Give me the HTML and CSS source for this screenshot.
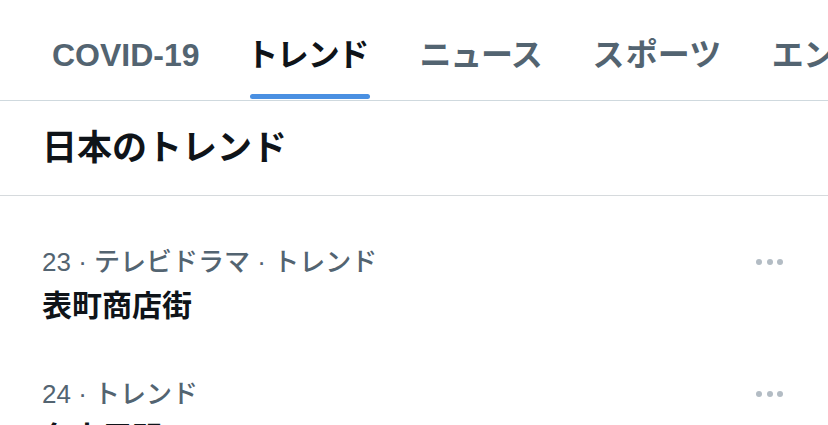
FILE: index.html
```
<!DOCTYPE html>
<html lang="ja">
<head>
  <meta charset="UTF-8">
  <meta name="viewport" content="width=device-width, initial-scale=1.0">
  <title>話題を検索</title>
  <link rel="stylesheet" href="styles.css">
</head>
<body>
  <div class="tabs">
    <div class="tab">
      <span class="tab-text latin">COVID-19</span>
      <span class="tab-bar"></span>
    </div>
    <div class="tab active">
      <span class="tab-text">トレンド</span>
      <span class="tab-bar"></span>
    </div>
    <div class="tab">
      <span class="tab-text">ニュース</span>
      <span class="tab-bar"></span>
    </div>
    <div class="tab">
      <span class="tab-text">スポーツ</span>
      <span class="tab-bar"></span>
    </div>
    <div class="tab">
      <span class="tab-text">エンタメ</span>
      <span class="tab-bar"></span>
    </div>
  </div>

  <div class="section-title">
    <h2>日本のトレンド</h2>
  </div>

  <div class="trend">
    <div class="trend-body">
      <div class="trend-meta">23 · テレビドラマ · トレンド</div>
      <div class="trend-name">表町商店街</div>
    </div>
    <div class="trend-more">
      <span class="dot"></span><span class="dot"></span><span class="dot"></span>
    </div>
  </div>

  <div class="trend">
    <div class="trend-body">
      <div class="trend-meta">24 · トレンド</div>
      <div class="trend-name">名古屋駅</div>
    </div>
    <div class="trend-more">
      <span class="dot"></span><span class="dot"></span><span class="dot"></span>
    </div>
  </div>
</body>
</html>
```

FILE: styles.css
```
body {
  margin: 0;
  background-color: #fff;
  font-family: 'Liberation Sans', 'Noto Sans CJK JP', sans-serif;
  color: #0f1419;
  overflow: hidden;
}

.tabs {
  display: flex;
  height: 100px;
  padding-left: 27px;
  border-bottom: 1px solid #cfd9de;
  white-space: nowrap;
}

.tab {
  display: flex;
  flex-direction: column;
  align-items: center;
  padding: 0 25px;
  flex-shrink: 0;
}

.tab-text {
  margin-top: 39px;
  line-height: 32px;
  font-size: 32px;
  font-weight: 700;
  color: #536471;
  font-feature-settings: "palt";
  letter-spacing: 1.5px;
}

.tab-text.latin {
  letter-spacing: 0;
}

.tab-bar {
  align-self: stretch;
  height: 5px;
  margin-top: 23px;
  border-radius: 3px;
}

.tab.active .tab-text {
  color: #0f1419;
}

.tab.active .tab-bar {
  background-color: #4a90e2;
}

.section-title {
  padding: 25px 42px 25px;
  border-bottom: 1px solid #d6dadd;
}

.section-title h2 {
  margin: 0;
  font-size: 35px;
  line-height: 44px;
  font-weight: 700;
  color: #0f1419;
}

.trend {
  display: flex;
  align-items: flex-start;
  justify-content: space-between;
  padding: 50px 45px 2px 42px;
}

.trend-meta {
  font-size: 26px;
  line-height: 32px;
  font-weight: 500;
  color: #536471;
}

.trend-name {
  margin-top: 8px;
  font-size: 30px;
  line-height: 40px;
  font-weight: 700;
  color: #0f1419;
}

.trend-more {
  display: flex;
  align-items: center;
  gap: 4.5px;
  height: 32px;
}

.dot {
  width: 6px;
  height: 6px;
  border-radius: 50%;
  background-color: #b3bcc4;
}
```
